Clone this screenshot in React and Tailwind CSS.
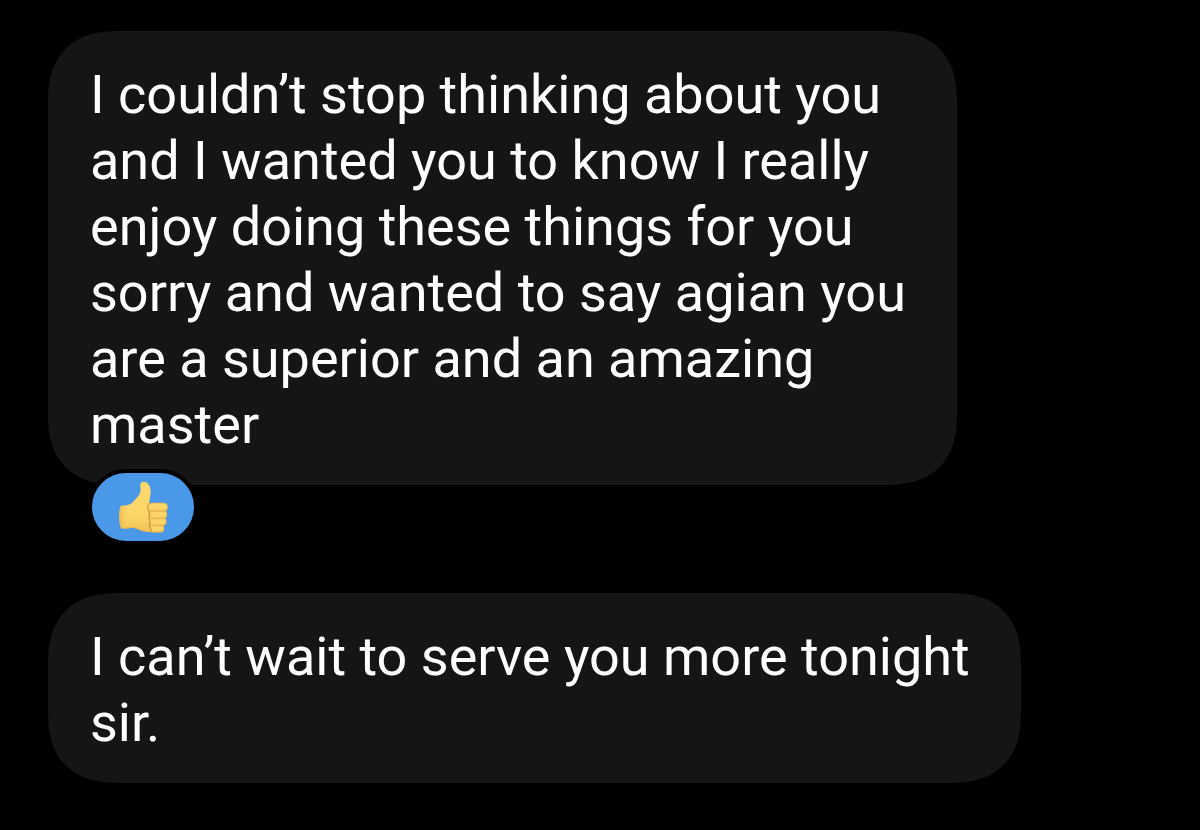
const messages = [
  {
    id: 1,
    text: "I couldn’t stop thinking about you\nand I wanted you to know I really\nenjoy doing these things for you\nsorry and wanted to say agian you\nare a superior and an amazing\nmaster",
    liked: true,
  },
  {
    id: 2,
    text: "I can’t wait to serve you more tonight\nsir.",
    liked: false,
  },
];

function ThumbsUp() {
  return (
    <svg viewBox="108 60 156 162" className="h-[54px] w-[52px]" aria-hidden="true">
      <defs>
        <linearGradient id="skin" x1="0" y1="0" x2="0" y2="1">
          <stop offset="0" stopColor="#fbd96a" />
          <stop offset="0.7" stopColor="#fbd568" />
          <stop offset="1" stopColor="#f1c153" />
        </linearGradient>
        <linearGradient id="cuff" x1="0" y1="0" x2="1" y2="0">
          <stop offset="0" stopColor="#edb850" />
          <stop offset="1" stopColor="#fbd366" stopOpacity="0" />
        </linearGradient>
      </defs>
      {/* thumb, palm and wrist */}
      <path
        d="M120 137C136 138 148 135 156 126C165 116 175 107 178 96C180 87 176 77 179 70C183 63 195 64 201 71C210 81 210 94 208 106C206 116 205 123 205 132L238 140L238 210C224 218 203 217 188 213C174 209 164 202 152 203C140 206 129 206 121 205C113 192 113 149 120 137Z"
        fill="url(#skin)"
      />
      <path
        d="M120 137C128 138 136 137 142 135V204C134 206 127 206 121 205C113 192 113 149 120 137Z"
        fill="url(#cuff)"
      />
      {/* fingers */}
      <g fill="url(#skin)" stroke="#dda647" strokeWidth="2">
        <rect x="205" y="194" width="44" height="23" rx="11" />
        <rect x="204" y="173" width="52" height="24" rx="12" />
        <rect x="203" y="151" width="55" height="25" rx="12" />
        <rect x="201" y="129" width="59" height="25" rx="12" />
      </g>
      <path
        d="M202 153C208 160 207 169 203 176C208 183 208 189 205 197C209 203 210 209 212 214"
        fill="none"
        stroke="#c98532"
        strokeWidth="3"
      />
      <path
        d="M205 130C199 135 198 143 202 151"
        fill="none"
        stroke="#d9983a"
        strokeWidth="3"
        strokeLinecap="round"
      />
      <path
        d="M124 205C136 207 143 201 154 202C167 203 177 214 195 215"
        fill="none"
        stroke="#e3aa4a"
        strokeWidth="2"
      />
    </svg>
  );
}

function Message({ text, liked }) {
  return (
    <li className="flex flex-col items-start">
      <p className="max-w-full whitespace-pre-line rounded-[72px] bg-[#151515] pt-[31px] pb-[27px] pl-[42px] pr-[51px] text-[54px] leading-[66px] text-white [corner-shape:superellipse(1.3)]">
        {text}
      </p>
      {liked && (
        <button
          type="button"
          aria-label="Thumbs up reaction"
          className="relative -mt-4 ml-10 flex h-[76px] w-[110px] items-center justify-center rounded-full border-4 border-black bg-[#4a99e9]"
        >
          <ThumbsUp />
        </button>
      )}
    </li>
  );
}

function App() {
  return (
    <main className="min-h-screen bg-black px-12 pt-[31px] pb-12 font-[Roboto,sans-serif]">
      <ul className="flex flex-col gap-12">
        {messages.map((message) => (
          <Message key={message.id} text={message.text} liked={message.liked} />
        ))}
      </ul>
    </main>
  );
}

export default App;
